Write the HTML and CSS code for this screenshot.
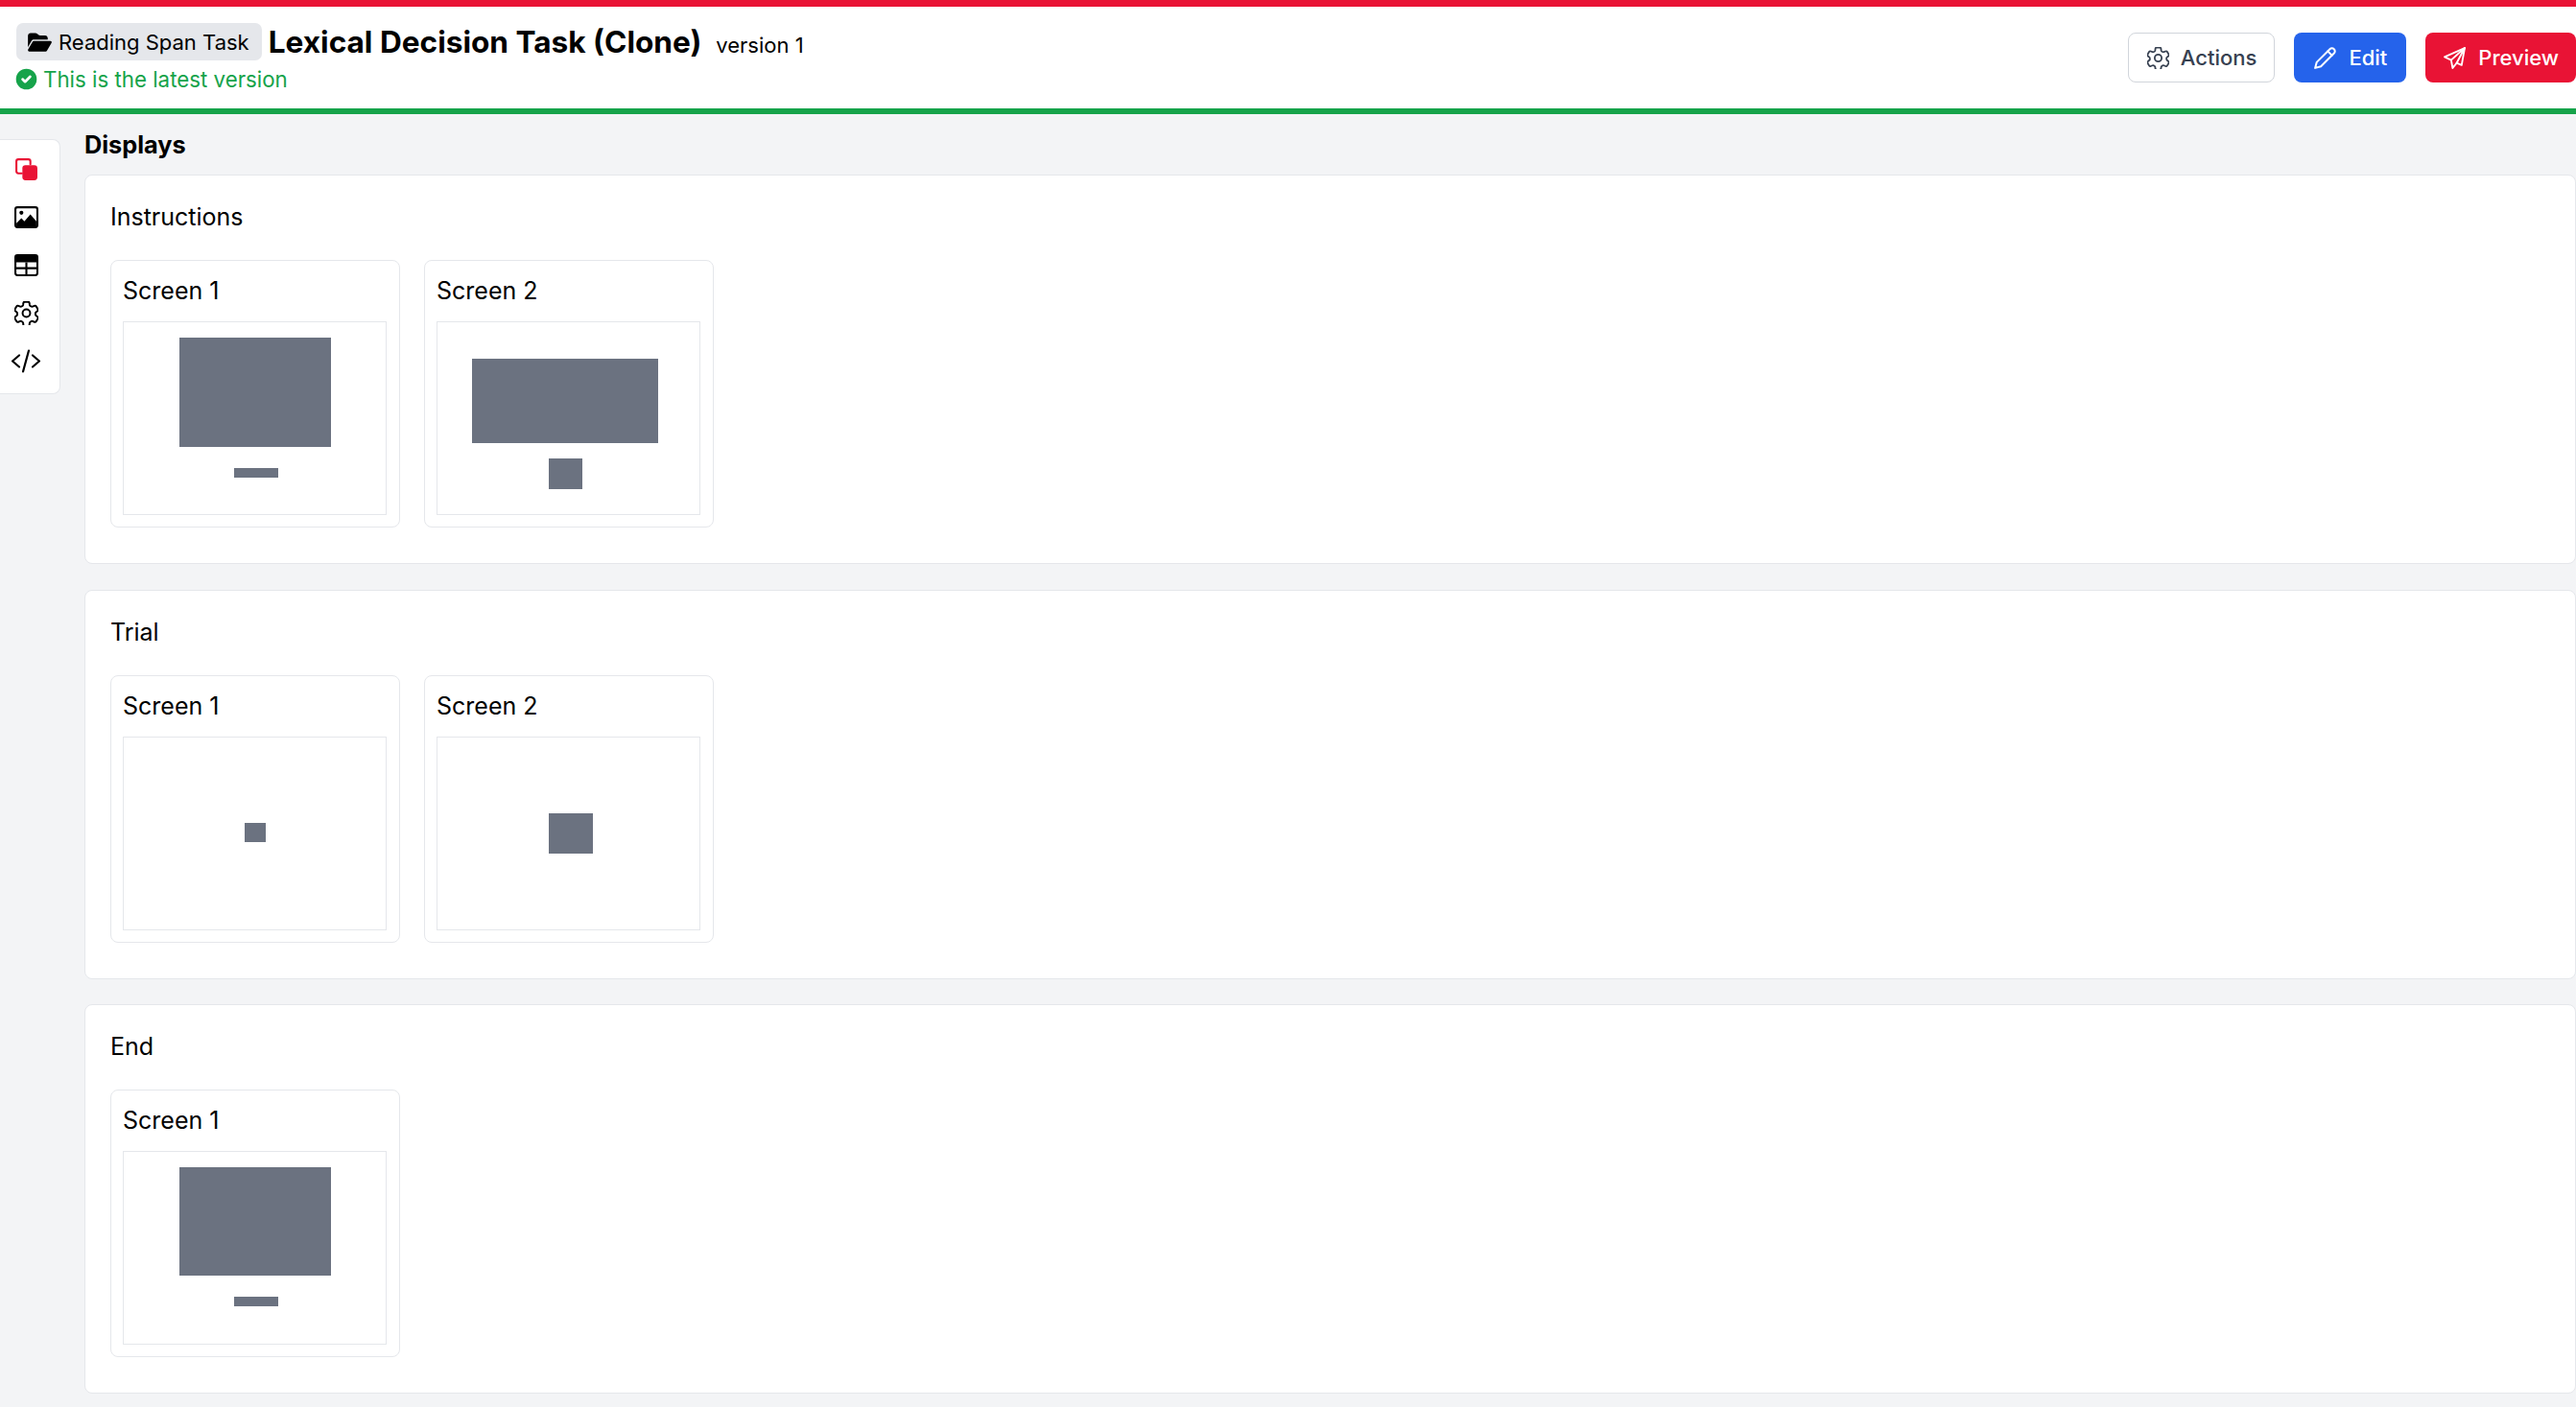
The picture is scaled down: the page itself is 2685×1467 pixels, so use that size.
FILE: index.html
```html
<!DOCTYPE html>
<html lang="en">
<head>
    <meta charset="UTF-8">
    <title>Lexical Decision Task (Clone)</title>
    <link rel="stylesheet" href="styles.css">
</head>
<body>

    <header class="topbar">
        <div class="topbar-left">
            <div class="title-row">
                <span class="folder-badge">
                    <svg class="folder-icon" viewBox="0 0 576 512"><path fill="currentColor" d="M88.700 223.800 0 375.800V96C0 60.700 28.700 32 64 32h117.500c17 0 33.300 6.700 45.300 18.700l26.500 26.500c12 12 28.300 18.700 45.300 18.700H416c35.300 0 64 28.700 64 64v32H144c-22.800 0-43.800 12.100-55.300 31.800zm27.600 16.100C122.100 230 132.600 224 144 224h400c11.500 0 22 6.100 27.700 16.100s5.700 22.200-.1 32.100l-112 192c-5.700 9.800-16.300 15.800-27.600 15.800H32c-11.500 0-22-6.100-27.700-16.100s-5.700-22.200.1-32.100l112-192z"/></svg>
                    Reading Span Task
                </span>
                <h1 class="task-title">Lexical Decision Task (Clone)</h1>
                <span class="version">version 1</span>
            </div>
            <div class="latest">
                <svg class="check-icon" viewBox="0 0 20 20"><path fill="currentColor" fill-rule="evenodd" d="M10 18a8 8 0 1 0 0-16 8 8 0 0 0 0 16zm3.700-9.300a1 1 0 0 0-1.400-1.400L9 10.600 7.700 9.300a1 1 0 0 0-1.400 1.400l2 2a1 1 0 0 0 1.400 0l4-4z"/></svg>
                This is the latest version
            </div>
        </div>
        <div class="topbar-actions">
            <button class="btn btn-plain">
                <svg class="btn-icon" viewBox="2.500 2.500 19 19" fill="none" stroke="currentColor" stroke-width="1.500" stroke-linecap="round" stroke-linejoin="round"><path d="M9.600 3.900c.1-.5.500-.9 1.100-.9h2.600c.6 0 1 .4 1.100.9l.2 1.600c.1.400.4.700.7.900l.5.300c.3.200.8.200 1.100.1l1.500-.6c.5-.2 1.100 0 1.400.5l1.300 2.200c.3.500.2 1.100-.3 1.400l-1.200 1c-.3.200-.5.600-.4 1v.6c0 .4.100.8.400 1l1.200 1c.5.300.6.900.3 1.400l-1.300 2.200c-.3.500-.9.700-1.400.5l-1.500-.6c-.3-.1-.8-.1-1.100.1l-.5.300c-.3.200-.6.500-.7.900l-.2 1.600c-.1.500-.5.900-1.100.9h-2.600c-.6 0-1-.4-1.100-.9l-.2-1.600c-.1-.4-.4-.7-.7-.9l-.5-.3c-.3-.2-.8-.2-1.100-.1l-1.500.6c-.5.200-1.100 0-1.400-.5l-1.300-2.200c-.3-.5-.2-1.100.3-1.400l1.200-1c.3-.2.500-.6.400-1v-.6c0-.4-.1-.8-.4-1l-1.200-1c-.5-.3-.6-.9-.3-1.400l1.300-2.200c.3-.5.900-.7 1.400-.5l1.500.6c.3.100.8.100 1.100-.1l.5-.3c.3-.2.600-.5.700-.9z"/><circle cx="12" cy="12" r="3"/></svg>
                Actions
            </button>
            <button class="btn btn-blue">
                <svg class="btn-icon" viewBox="1.500 1.500 21 21" fill="none" stroke="currentColor" stroke-width="1.800" stroke-linecap="round" stroke-linejoin="round"><path d="M16.500 3.500a2.500 2.500 0 0 1 4 4L8 20l-5.500 1.500L4 16z"/><path d="m14.500 5.500 4 4"/></svg>
                Edit
            </button>
            <button class="btn btn-red">
                <svg class="btn-icon" viewBox="1 1 22 22" fill="none" stroke="currentColor" stroke-width="1.800" stroke-linecap="round" stroke-linejoin="round"><path d="M22 2 2 11l6.500 3L10 22l4-5 5 2z"/><path d="M22 2 8.500 14M22 2l-8 15"/></svg>
                Preview
            </button>
        </div>
    </header>

    <div class="page">
        <nav class="sidebar">
            <svg class="side-icon side-active" viewBox="0 0 24 24"><path d="M7.500 16H4a2 2 0 0 1-2-2V4a2 2 0 0 1 2-2h10a2 2 0 0 1 2 2v3" fill="none" stroke="currentColor" stroke-width="2" stroke-linecap="round"/><rect x="8" y="8" width="15" height="15" rx="3" fill="currentColor"/></svg>
            <svg class="side-icon" viewBox="0 0 24 24"><rect x="1" y="2" width="22" height="20" rx="2" fill="none" stroke="currentColor" stroke-width="2"/><circle cx="7" cy="7.500" r="2" fill="currentColor"/><path d="M2 21v-3l5-5 3 3 6-7 6 7v5z" fill="currentColor"/></svg>
            <svg class="side-icon" viewBox="0 0 24 24"><rect x="1" y="2" width="22" height="20" rx="2" fill="none" stroke="currentColor" stroke-width="2"/><path d="M1 4a2 2 0 0 1 2-2h18a2 2 0 0 1 2 2v5H1z" fill="currentColor"/><path d="M1 15h22M12 9v13" stroke="currentColor" stroke-width="2"/></svg>
            <svg class="side-icon" viewBox="2.500 2.500 19 19" fill="none" stroke="currentColor" stroke-width="1.500" stroke-linecap="round" stroke-linejoin="round"><path d="M9.600 3.900c.1-.5.500-.9 1.100-.9h2.600c.6 0 1 .4 1.100.9l.2 1.600c.1.400.4.700.7.900l.5.300c.3.200.8.200 1.100.1l1.500-.6c.5-.2 1.100 0 1.400.5l1.300 2.200c.3.500.2 1.100-.3 1.400l-1.200 1c-.3.200-.5.600-.4 1v.6c0 .4.100.8.400 1l1.200 1c.5.300.6.900.3 1.400l-1.300 2.200c-.3.500-.9.700-1.400.5l-1.500-.6c-.3-.1-.8-.1-1.100.1l-.5.300c-.3.200-.6.500-.7.900l-.2 1.600c-.1.500-.5.900-1.100.9h-2.600c-.6 0-1-.4-1.100-.9l-.2-1.600c-.1-.4-.4-.7-.7-.9l-.5-.3c-.3-.2-.8-.2-1.100-.1l-1.500.6c-.5.200-1.100 0-1.400-.5l-1.300-2.200c-.3-.5-.2-1.100.3-1.400l1.200-1c.3-.2.500-.6.400-1v-.6c0-.4-.1-.8-.4-1l-1.200-1c-.5-.3-.6-.9-.3-1.400l1.300-2.200c.3-.5.900-.7 1.400-.5l1.500.6c.3.100.8.100 1.100-.1l.5-.3c.3-.2.600-.5.700-.9z"/><circle cx="12" cy="12" r="3"/></svg>
            <svg class="side-icon side-code" viewBox="0 0 32 24" fill="none" stroke="currentColor" stroke-width="2.200" stroke-linecap="round" stroke-linejoin="round"><path d="M9 6l-7 6 7 6M23 6l7 6-7 6M19 1l-6 22"/></svg>
        </nav>

        <main class="content">
            <h2 class="content-title">Displays</h2>

            <!-- Instructions block -->
            <section class="block">
                <h3 class="block-title">Instructions</h3>
                <div class="screens">
                    <div class="screen">
                        <div class="screen-name">Screen 1</div>
                        <div class="preview">
                            <div class="shape" style="left:58px;top:16px;width:158px;height:114px"></div>
                            <div class="shape" style="left:115px;top:152px;width:46px;height:10px"></div>
                        </div>
                    </div>
                    <div class="screen">
                        <div class="screen-name">Screen 2</div>
                        <div class="preview">
                            <div class="shape" style="left:36px;top:38px;width:194px;height:88px"></div>
                            <div class="shape" style="left:116px;top:142px;width:35px;height:32px"></div>
                        </div>
                    </div>
                </div>
            </section>

            <!-- Trial block -->
            <section class="block">
                <h3 class="block-title">Trial</h3>
                <div class="screens">
                    <div class="screen">
                        <div class="screen-name">Screen 1</div>
                        <div class="preview">
                            <div class="shape" style="left:126px;top:89px;width:22px;height:20px"></div>
                        </div>
                    </div>
                    <div class="screen">
                        <div class="screen-name">Screen 2</div>
                        <div class="preview">
                            <div class="shape" style="left:116px;top:79px;width:46px;height:42px"></div>
                        </div>
                    </div>
                </div>
            </section>

            <!-- End block -->
            <section class="block">
                <h3 class="block-title">End</h3>
                <div class="screens">
                    <div class="screen">
                        <div class="screen-name">Screen 1</div>
                        <div class="preview">
                            <div class="shape" style="left:58px;top:16px;width:158px;height:113px"></div>
                            <div class="shape" style="left:115px;top:151px;width:46px;height:10px"></div>
                        </div>
                    </div>
                </div>
            </section>
        </main>
    </div>

</body>
</html>
```

FILE: styles.css
```css
* {
    box-sizing: border-box;
}
html, body {
    height: 100%;
}
body {
    margin: 0;
    background-color: #f3f4f6;
    font-family: Inter, "Liberation Sans", sans-serif;
    color: #000;
    overflow: hidden;
}
h1, h2, h3 {
    margin: 0;
}

/* Top bar */
.topbar {
    display: flex;
    justify-content: space-between;
    align-items: center;
    height: 119px;
    padding-left: 17px;
    background-color: #fff;
    border-top: 7px solid #e91335;
    border-bottom: 6px solid #16a34a;
}
.topbar-left {
    display: flex;
    flex-direction: column;
    gap: 6px;
}
.title-row {
    display: flex;
    align-items: center;
}
.folder-badge {
    display: flex;
    align-items: center;
    gap: 7px;
    height: 39px;
    padding: 0 13px 0 12px;
    background-color: #e5e7eb;
    border-radius: 7px;
    font-size: 22px;
    white-space: nowrap;
}
.folder-icon {
    width: 25px;
    height: 22px;
}
.task-title {
    margin-left: 7px;
    font-size: 31.600px;
    font-weight: 700;
    white-space: nowrap;
}
.version {
    margin-left: 15px;
    margin-top: 6px;
    font-size: 22px;
}
.latest {
    display: flex;
    align-items: center;
    gap: 6px;
    font-size: 22.300px;
    color: #16a34a;
}
.check-icon {
    width: 27px;
    height: 27px;
    margin-left: -3px;
    margin-right: -2px;
}

.topbar-actions {
    display: flex;
    gap: 20px;
}
.btn {
    display: flex;
    align-items: center;
    gap: 13px;
    height: 52px;
    padding: 0 19px 0 20px;
    border: 1px solid transparent;
    border-radius: 8px;
    font-family: inherit;
    font-size: 22px;
    font-weight: 500;
}
.btn-icon {
    width: 23px;
    height: 23px;
}
.btn-plain {
    gap: 12px;
    padding: 0 18px 0 19px;
    background-color: #fff;
    border-color: #d1d5db;
    color: #374151;
}
.btn-blue {
    background-color: #2563eb;
    color: #fff;
}
.btn-red {
    padding: 0 17px 0 18px;
    background-color: #e91335;
    color: #fff;
}

/* Left rail + main column */
.page {
    display: flex;
    align-items: flex-start;
}
.sidebar {
    display: flex;
    flex-direction: column;
    align-items: center;
    gap: 25px;
    flex: 0 0 63px;
    height: 266px;
    margin-top: 26px;
    padding: 18px 8px 0 0;
    background-color: #fff;
    border: 1px solid #e5e7eb;
    border-left: 0;
    border-radius: 0 8px 8px 0;
}
.side-icon {
    flex: none;
    width: 25px;
    height: 25px;
    color: #000;
}
.side-active {
    color: #e91335;
}
.side-code {
    width: 32px;
}

.content {
    flex: 1;
    min-width: 0;
    margin-left: 25px;
}
.content-title {
    height: 63px;
    padding-top: 16px;
    font-size: 25.300px;
    font-weight: 700;
}
.block {
    height: 406px;
    margin-bottom: 26.500px;
    padding: 26px 26px 0;
    background-color: #fff;
    border: 1px solid #e5e7eb;
    border-radius: 8px;
}
.block-title {
    height: 62px;
    font-size: 25px;
    font-weight: 400;
    line-height: 35px;
}
.screens {
    display: flex;
    gap: 25px;
}
.screen {
    width: 302px;
    height: 279px;
    padding: 13px 13px 13px 12px;
    border: 1px solid #e5e7eb;
    border-radius: 8px;
}
.screen-name {
    height: 50px;
    font-size: 25px;
    line-height: 36px;
}
.preview {
    position: relative;
    height: 202px;
    border: 1px solid #e5e7eb;
}
.shape {
    position: absolute;
    background-color: #6b7280;
}
```
